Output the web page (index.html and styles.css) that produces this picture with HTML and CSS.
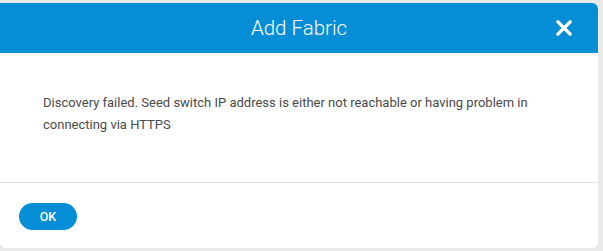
FILE: index.html
```html
<!DOCTYPE html>
<html>
<head>
<meta charset="utf-8">
<link rel="stylesheet" href="styles.css">
</head>
<body>
<div class="dialog">
  <div class="header">
    <div class="title">Add Fabric</div>
    <button class="close" aria-label="Close">
      <svg width="16" height="16" viewBox="0 0 16 16"><path d="M2 2 L14 14 M14 2 L2 14" stroke="#fff" stroke-width="3.2" stroke-linecap="square"/></svg>
    </button>
  </div>
  <div class="content">
    <p class="message">Discovery failed. Seed switch IP address is either not reachable or having problem in connecting via HTTPS</p>
  </div>
  <div class="footer">
    <button class="ok">OK</button>
  </div>
</div>
</body>
</html>
```

FILE: styles.css
```css
html, body {
  margin: 0;
  padding: 0;
}
body {
  background: #e9e9e9;
  width: 603px;
  height: 251px;
  overflow: hidden;
  font-family: Roboto, "Liberation Sans", sans-serif;
}
.dialog {
  margin-top: 3px;
  width: 598px;
  height: 245px;
  background: #fff;
  border-radius: 0 6px 6px 6px;
  display: flex;
  flex-direction: column;
  overflow: hidden;
}
.header {
  height: 50px;
  background: #058dd5;
  display: flex;
  align-items: center;
  justify-content: center;
  position: relative;
  flex: none;
}
.title {
  color: #fff;
  font-size: 20.5px;
  font-weight: 300;
}
.close {
  position: absolute;
  right: 26px;
  top: 17px;
  width: 16px;
  height: 16px;
  padding: 0;
  border: 0;
  background: none;
  display: block;
}
.close svg { display: block; }
.content {
  height: 130px;
  border-bottom: 1px solid #e2e2e2;
  padding: 39px 43px 0 43px;
  box-sizing: border-box;
  flex: none;
}
.message {
  margin: 0;
  font-size: 13px;
  line-height: 22px;
  color: #4a4a4a;
  max-width: 530px;
}
.footer {
  flex: 1;
  padding: 20px 19px 0;
}
.ok {
  width: 58px;
  height: 27px;
  border: 0;
  border-radius: 14px;
  background: #058dd5;
  color: #fff;
  font-family: Roboto, "Liberation Sans", sans-serif;
  font-size: 12.5px;
  font-weight: 500;
  padding: 0;
}
```
